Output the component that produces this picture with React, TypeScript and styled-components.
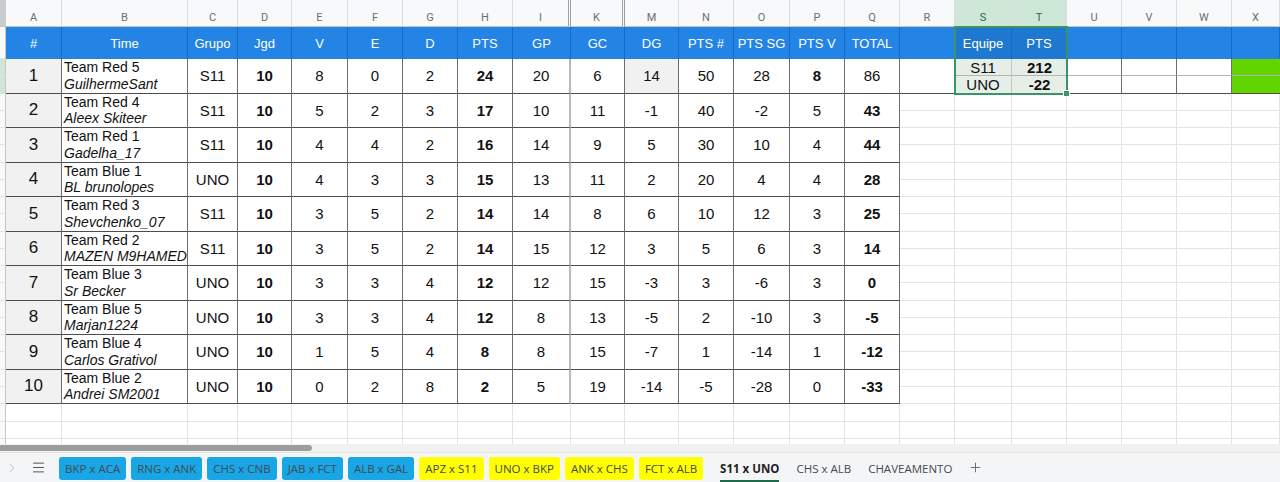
import styled, { createGlobalStyle } from "styled-components";
import { ChevronRight, Menu, Plus } from "lucide-react";

const GlobalStyle = createGlobalStyle`
  html, body { margin: 0; padding: 0; background: #fff; }
  body {
    width: 1280px;
    height: 482px;
    overflow: hidden;
    font-family: "Liberation Sans", Arial, sans-serif;
  }
`;

// strip, A, B, C, D, E, F, G, H, I, K, M, N, O, P, Q, R, S, T, U, V, W, X
const COLS = [6, 56, 126, 50, 54, 56, 55, 55, 55, 58, 54, 54, 55, 56, 55, 55, 55, 57, 55, 55, 55, 55, 48];
const LETTERS = ["", "A", "B", "C", "D", "E", "F", "G", "H", "I", "K", "M", "N", "O", "P", "Q", "R", "S", "T", "U", "V", "W", "X"];
const HEADS = ["#", "Time", "Grupo", "Jgd", "V", "E", "D", "PTS", "GP", "GC", "DG", "PTS #", "PTS SG", "PTS V", "TOTAL"];

type Row = {
  team: string;
  player: string;
  grupo: string;
  nums: number[]; // Jgd V E D PTS GP GC DG PTS# PTSSG PTSV TOTAL
};

const ROWS: Row[] = [
  { team: "Team Red 5", player: "GuilhermeSant", grupo: "S11", nums: [10, 8, 0, 2, 24, 20, 6, 14, 50, 28, 8, 86] },
  { team: "Team Red 4", player: "Aleex Skiteer", grupo: "S11", nums: [10, 5, 2, 3, 17, 10, 11, -1, 40, -2, 5, 43] },
  { team: "Team Red 1", player: "Gadelha_17", grupo: "S11", nums: [10, 4, 4, 2, 16, 14, 9, 5, 30, 10, 4, 44] },
  { team: "Team Blue 1", player: "BL brunolopes", grupo: "UNO", nums: [10, 4, 3, 3, 15, 13, 11, 2, 20, 4, 4, 28] },
  { team: "Team Red 3", player: "Shevchenko_07", grupo: "S11", nums: [10, 3, 5, 2, 14, 14, 8, 6, 10, 12, 3, 25] },
  { team: "Team Red 2", player: "MAZEN M9HAMED", grupo: "S11", nums: [10, 3, 5, 2, 14, 15, 12, 3, 5, 6, 3, 14] },
  { team: "Team Blue 3", player: "Sr Becker", grupo: "UNO", nums: [10, 3, 3, 4, 12, 12, 15, -3, 3, -6, 3, 0] },
  { team: "Team Blue 5", player: "Marjan1224", grupo: "UNO", nums: [10, 3, 3, 4, 12, 8, 13, -5, 2, -10, 3, -5] },
  { team: "Team Blue 4", player: "Carlos Grativol", grupo: "UNO", nums: [10, 1, 5, 4, 8, 8, 15, -7, 1, -14, 1, -12] },
  { team: "Team Blue 2", player: "Andrei SM2001", grupo: "UNO", nums: [10, 0, 2, 8, 2, 5, 19, -14, -5, -28, 0, -33] },
];

const TABS: { label: string; tone: "blue" | "yellow" | "plain"; active?: boolean }[] = [
  { label: "BKP x ACA", tone: "blue" },
  { label: "RNG x ANK", tone: "blue" },
  { label: "CHS x CNB", tone: "blue" },
  { label: "JAB x FCT", tone: "blue" },
  { label: "ALB x GAL", tone: "blue" },
  { label: "APZ x S11", tone: "yellow" },
  { label: "UNO x BKP", tone: "yellow" },
  { label: "ANK x CHS", tone: "yellow" },
  { label: "FCT x ALB", tone: "yellow" },
  { label: "S11 x UNO", tone: "plain", active: true },
  { label: "CHS x ALB", tone: "plain" },
  { label: "CHAVEAMENTO", tone: "plain" },
];

const Page = styled.div`
  width: 1280px;
  height: 482px;
  display: flex;
  flex-direction: column;
  overflow: hidden;
`;

const Sheet = styled.div`
  position: relative;
  height: 444px;
  overflow: hidden;
  display: grid;
  grid-template-columns: ${COLS.map((w) => `${w}px`).join(" ")};
  grid-template-rows: 27px 32px repeat(20, 17.25px) repeat(3, 17.5px);
`;

type Place = { $col: number; $row: number; $span?: number };

const placed = ({ $col, $row, $span }: Place) => `
  grid-column: ${$col};
  grid-row: ${$row} / span ${$span ?? 1};
`;

const Corner = styled.div`
  grid-column: 1;
  grid-row: 1;
  background: #c9cccf;
  border-bottom: 1px solid #c4c7c5;
`;

const Letter = styled.div<Place & { $sel?: boolean; $hidden?: boolean }>`
  ${placed};
  box-sizing: border-box;
  display: flex;
  align-items: center;
  justify-content: center;
  padding-top: 9px;
  background: ${({ $sel }) => ($sel ? "#cfe7d7" : "#f8f9fa")};
  color: ${({ $sel }) => ($sel ? "#1f6d3f" : "#6b6f73")};
  border-right: ${({ $hidden }) => ($hidden ? "3px double #9aa0a6" : "1px solid #dadce0")};
  border-bottom: 1px solid #c4c7c5;
  font-family: Roboto, "Liberation Sans", sans-serif;
  font-size: 11px;
`;

const RowStrip = styled.div<Place & { $sel?: boolean }>`
  ${placed};
  box-sizing: border-box;
  background: ${({ $sel }) => ($sel ? "#cfe7d7" : "#f8f9fa")};
  border-right: 1px solid #c4c7c5;
  border-bottom: 1px solid #e2e3e3;
`;

const Head = styled.div<Place & { $sel?: boolean }>`
  ${placed};
  box-sizing: border-box;
  display: flex;
  align-items: center;
  justify-content: center;
  background: ${({ $sel }) => ($sel ? "#1f78cf" : "#2384e6")};
  border-right: 1px solid #1a6cc2;
  color: #fff;
  font-size: 13px;
  white-space: nowrap;
`;

const Cell = styled.div<
  Place & { $shade?: boolean; $bold?: boolean; $big?: boolean; $edge?: boolean }
>`
  ${placed};
  box-sizing: border-box;
  display: flex;
  align-items: center;
  justify-content: center;
  overflow: hidden;
  background: ${({ $shade }) => ($shade ? "#f1f1f1" : "#fff")};
  border-right: ${({ $edge }) => ($edge ? "2px solid #b9b9b9" : "1px solid #6e6e6e")};
  border-bottom: 1px solid #4d4d4d;
  color: #111;
  font-size: ${({ $big }) => ($big ? "17px" : "15px")};
  font-weight: ${({ $bold }) => ($bold ? 700 : 400)};
`;

const TeamCell = styled.div<Place>`
  ${placed};
  box-sizing: border-box;
  display: flex;
  flex-direction: column;
  justify-content: center;
  padding-left: 2px;
  overflow: hidden;
  white-space: nowrap;
  border-right: 1px solid #6e6e6e;
  border-bottom: 1px solid #4d4d4d;
  color: #111;
  font-size: 14px;
  line-height: 16.5px;

  em {
    font-style: italic;
  }
`;

const Blank = styled.div<Place>`
  ${placed};
  box-sizing: border-box;
  border-right: 1px solid #e2e3e3;
  border-bottom: 1px solid #e2e3e3;
`;

const SideCell = styled.div<
  Place & { $fill?: string; $line?: "dark" | "light"; $side?: "dark" | "light" | "none" }
>`
  ${placed};
  box-sizing: border-box;
  display: flex;
  align-items: center;
  justify-content: center;
  background: ${({ $fill }) => $fill ?? "#fff"};
  border-bottom: 1px solid ${({ $line }) => ($line === "light" ? "#b4b4b4" : "#4d4d4d")};
  border-right: ${({ $side }) =>
    $side === "none" ? "none" : `1px solid ${$side === "light" ? "#c2c8c4" : "#6e6e6e"}`};
  color: #111;
  font-size: 15px;
  line-height: 1;
`;

const Pick = styled.div`
  position: absolute;
  left: 954px;
  top: 26px;
  width: 114px;
  height: 69px;
  box-sizing: border-box;
  border: 2px solid #3c936a;
  pointer-events: none;

  &::after {
    content: "";
    position: absolute;
    right: -4px;
    bottom: -4px;
    width: 5px;
    height: 5px;
    background: #3c936a;
    border: 1px solid #fff;
  }
`;

const Scroll = styled.div`
  height: 8px;
  background: #f1f1f1;
  border-bottom: 1px solid #e3e3e3;
  display: flex;
  align-items: center;
`;

const Thumb = styled.div`
  width: 312px;
  height: 6px;
  background: #9d9d9d;
  border-radius: 0 4px 4px 0;
`;

const TabBar = styled.div`
  flex: 1;
  display: flex;
  align-items: center;
  background: #f4f5f6;
  font-family: "Open Sans", "Liberation Sans", sans-serif;
  font-size: 11.5px;
`;

const Controls = styled.div`
  width: 59px;
  display: flex;
  align-items: center;
  padding-left: 5px;
  box-sizing: border-box;
  gap: 12px;
  color: #4a4a4a;
`;

const Tab = styled.div<{ $tone: "blue" | "yellow" | "plain"; $active?: boolean }>`
  position: relative;
  height: 23px;
  margin-top: 1px;
  padding: 0 ${({ $tone }) => ($tone === "plain" ? "8px" : "6px")};
  margin-right: ${({ $tone }) => ($tone === "plain" ? "1px" : "5px")};
  display: flex;
  align-items: center;
  border-radius: 3px;
  white-space: nowrap;
  background: ${({ $tone }) =>
    $tone === "blue" ? "#18a6e6" : $tone === "yellow" ? "#ffff00" : "transparent"};
  color: ${({ $active }) => ($active ? "#1f1f1f" : "#444a52")};
  font-weight: ${({ $active }) => ($active ? 700 : 400)};

  ${({ $active }) =>
    $active &&
    `margin-left: 4px;
    &::after {
      content: "";
      position: absolute;
      left: 8px;
      right: 8px;
      bottom: -3px;
      height: 3px;
      background: #1e6b4c;
    }`}
`;

const AddTab = styled.div`
  margin-left: 7px;
  color: #666;
  display: flex;
`;

export default function App() {
  const cells: JSX.Element[] = [];

  // column letters
  LETTERS.forEach((l, i) => {
    if (i === 0) return;
    cells.push(
      <Letter key={`l${i}`} $col={i + 1} $row={1} $sel={l === "S" || l === "T"} $hidden={l === "I" || l === "K"}>
        {l}
      </Letter>
    );
  });

  // row header strip (cut off at the left edge)
  for (let r = 2; r <= 25; r++) {
    cells.push(<RowStrip key={`r${r}`} $col={1} $row={r} $sel={r === 3 || r === 4} />);
  }

  // header row
  for (let c = 2; c <= 23; c++) {
    const text = c <= 16 ? HEADS[c - 2] : c === 18 ? "Equipe" : c === 19 ? "PTS" : "";
    cells.push(
      <Head key={`h${c}`} $col={c} $row={2} $sel={c === 18 || c === 19}>
        {text}
      </Head>
    );
  }

  // data rows
  ROWS.forEach((row, i) => {
    const r = 3 + i * 2;
    cells.push(
      <Cell key={`a${i}`} $col={2} $row={r} $span={2} $shade $big>
        {i + 1}
      </Cell>
    );
    cells.push(
      <TeamCell key={`b${i}`} $col={3} $row={r} $span={2}>
        <span>{row.team}</span>
        <em>{row.player}</em>
      </TeamCell>
    );
    cells.push(
      <Cell key={`c${i}`} $col={4} $row={r} $span={2}>
        {row.grupo}
      </Cell>
    );
    row.nums.forEach((n, j) => {
      const col = 5 + j;
      const bold =
        j === 0 || j === 4 || (j === 10 && i === 0) || (j === 11 && i !== 0);
      cells.push(
        <Cell
          key={`n${i}-${j}`}
          $col={col}
          $row={r}
          $span={2}
          $bold={bold}
          $edge={col === 10}
          $shade={j === 7 && i === 0}
        >
          {n}
        </Cell>
      );
    });
  });

  // empty rows below the table
  for (let r = 23; r <= 25; r++) {
    for (let c = 2; c <= 16; c++) {
      cells.push(<Blank key={`e${r}-${c}`} $col={c} $row={r} />);
    }
  }

  // right side: rows 3-4
  cells.push(<SideCell key="R" $col={17} $row={3} $span={2} $side="none" />);
  cells.push(<SideCell key="S1" $col={18} $row={3} $fill="#e6eee8" $line="light" $side="light">S11</SideCell>);
  cells.push(<SideCell key="S2" $col={18} $row={4} $fill="#e6eee8" $side="light">UNO</SideCell>);
  cells.push(<SideCell key="T1" $col={19} $row={3} $fill="#e6eee8" $line="light" $side="none"><b>212</b></SideCell>);
  cells.push(<SideCell key="T2" $col={19} $row={4} $fill="#e6eee8" $side="none"><b>-22</b></SideCell>);
  for (let c = 20; c <= 22; c++) {
    cells.push(<SideCell key={`u1${c}`} $col={c} $row={3} $line="light" />);
    cells.push(<SideCell key={`u2${c}`} $col={c} $row={4} />);
  }
  cells.push(<SideCell key="X1" $col={23} $row={3} $fill="#62d400" $line="light" $side="none" />);
  cells.push(<SideCell key="X2" $col={23} $row={4} $fill="#62d400" $side="none" />);

  // right side: empty grid
  for (let r = 5; r <= 25; r++) {
    for (let c = 17; c <= 23; c++) {
      cells.push(<Blank key={`g${r}-${c}`} $col={c} $row={r} />);
    }
  }

  return (
    <>
      <GlobalStyle />
      <Page>
        <Sheet>
          <Corner />
          {cells}
          <Pick />
        </Sheet>
        <Scroll>
          <Thumb />
        </Scroll>
        <TabBar>
          <Controls>
            <ChevronRight size={14} strokeWidth={1.5} color="#b5b5b5" />
            <Menu size={15} strokeWidth={1.5} />
          </Controls>
          {TABS.map((t) => (
            <Tab key={t.label} $tone={t.tone} $active={t.active}>
              {t.label}
            </Tab>
          ))}
          <AddTab>
            <Plus size={15} strokeWidth={1.5} />
          </AddTab>
        </TabBar>
      </Page>
    </>
  );
}
